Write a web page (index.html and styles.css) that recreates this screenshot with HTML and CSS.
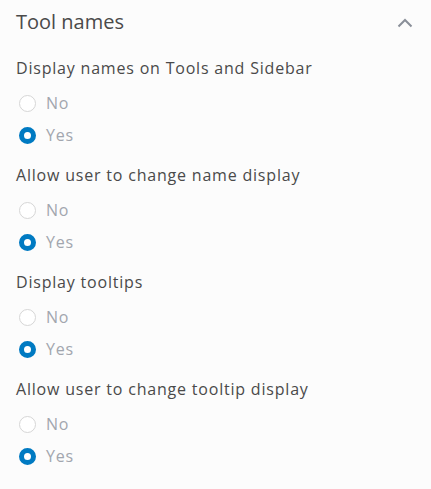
FILE: index.html
```html
<!DOCTYPE html>
<html lang="en">
<head>
<meta charset="utf-8">
<title>Tool names</title>
<link rel="stylesheet" href="styles.css">
</head>
<body>
<div class="panel">
  <div class="header">
    <span class="title">Tool names</span>
    <svg class="chevron" width="16" height="10" viewBox="0 0 16 10" aria-hidden="true"><path d="M1.5 8.5 L8 2 L14.5 8.5" fill="none" stroke="#8a8f99" stroke-width="2"/></svg>
  </div>
  <div class="content">
    <div class="group">
      <div class="label">Display names on Tools and Sidebar</div>
      <div class="option"><span class="radio"></span><span class="opt-text">No</span></div>
      <div class="option"><span class="radio checked"></span><span class="opt-text">Yes</span></div>
    </div>
    <div class="group">
      <div class="label">Allow user to change name display</div>
      <div class="option"><span class="radio"></span><span class="opt-text">No</span></div>
      <div class="option"><span class="radio checked"></span><span class="opt-text">Yes</span></div>
    </div>
    <div class="group">
      <div class="label">Display tooltips</div>
      <div class="option"><span class="radio"></span><span class="opt-text">No</span></div>
      <div class="option"><span class="radio checked"></span><span class="opt-text">Yes</span></div>
    </div>
    <div class="group">
      <div class="label">Allow user to change tooltip display</div>
      <div class="option"><span class="radio"></span><span class="opt-text">No</span></div>
      <div class="option"><span class="radio checked"></span><span class="opt-text">Yes</span></div>
    </div>
  </div>
</div>
</body>
</html>
```
FILE: styles.css
```css
html, body {
  margin: 0;
  padding: 0;
  background: #fcfcfc;
}
body {
  font-family: "Open Sans", Lato, "Liberation Sans", sans-serif;
  color: #4a4a4a;
}
.panel {
  width: 431px;
}
.header {
  display: flex;
  align-items: center;
  justify-content: space-between;
  height: 44px;
  padding: 0 18px 0 16px;
}
.title {
  font-size: 20px;
  line-height: 44px;
  color: #4a4a4a;
}
.chevron {
  display: block;
  margin-top: 2px;
}
.content {
  padding: 12px 16px 0 16px;
  display: flex;
  flex-direction: column;
  gap: 12px;
}
.label {
  font-size: 16px;
  line-height: 24px;
  letter-spacing: 0.8px;
  margin-bottom: 7px;
  color: #4a4a4a;
}
.option {
  display: flex;
  align-items: center;
  height: 32px;
}
.radio {
  box-sizing: border-box;
  width: 17px;
  height: 17px;
  margin-left: 3px;
  margin-right: 10px;
  border-radius: 50%;
  border: 1px solid #d6d6d6;
  background: #ffffff;
  flex: none;
}
.radio.checked {
  border: 5px solid #007ac2;
}
.opt-text {
  font-size: 16px;
  line-height: 24px;
  letter-spacing: 0.8px;
  color: #a2a6ae;
}
```
